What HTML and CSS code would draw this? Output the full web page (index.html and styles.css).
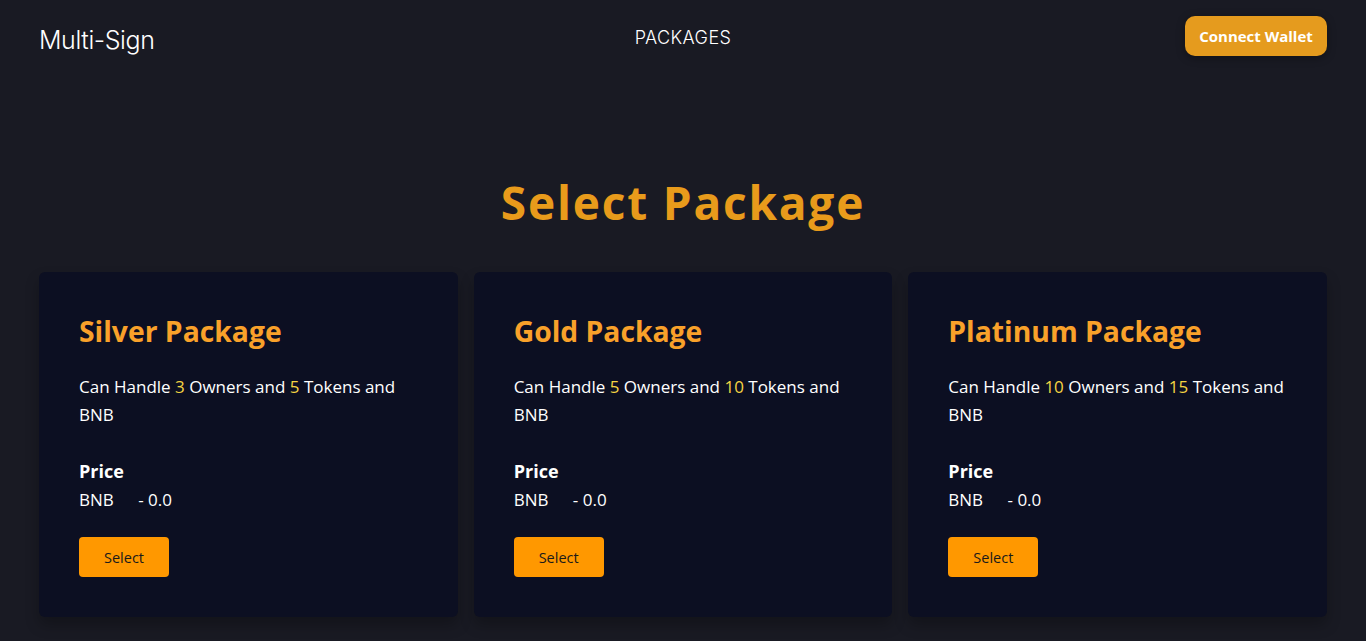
FILE: index.html
```html
<!DOCTYPE html>
<html lang="en">
<head>
<meta charset="utf-8">
<title>Multi-Sign</title>
<link rel="stylesheet" href="styles.css">
</head>
<body>
<header class="topbar">
  <div class="brand">Multi-Sign</div>
  <nav class="nav"><a class="nav-link" href="#">PACKAGES</a></nav>
  <div class="actions"><button class="connect">Connect Wallet</button></div>
</header>
<main class="main">
  <h1 class="page-title">Select Package</h1>
  <section class="cards">
    <article class="card">
      <h2 class="card-title">Silver Package</h2>
      <p class="card-desc">Can Handle <span class="hl">3</span> Owners and <span class="hl">5</span> Tokens and BNB</p>
      <div class="price-label">Price</div>
      <div class="price-value">BNB <span class="gap"></span>- 0.0</div>
      <button class="select-btn">Select</button>
    </article>
    <article class="card">
      <h2 class="card-title">Gold Package</h2>
      <p class="card-desc">Can Handle <span class="hl">5</span> Owners and <span class="hl">10</span> Tokens and BNB</p>
      <div class="price-label">Price</div>
      <div class="price-value">BNB <span class="gap"></span>- 0.0</div>
      <button class="select-btn">Select</button>
    </article>
    <article class="card">
      <h2 class="card-title">Platinum Package</h2>
      <p class="card-desc">Can Handle <span class="hl">10</span> Owners and <span class="hl">15</span> Tokens and BNB</p>
      <div class="price-label">Price</div>
      <div class="price-value">BNB <span class="gap"></span>- 0.0</div>
      <button class="select-btn">Select</button>
    </article>
  </section>
</main>
</body>
</html>
```
FILE: styles.css
```css
* { box-sizing: border-box; }
html, body { margin: 0; padding: 0; }
body {
  background: #191a23;
  color: #ffffff;
  font-family: "Open Sans", "Noto Sans", sans-serif;
  min-height: 641px;
}
.topbar {
  display: grid;
  grid-template-columns: 1fr auto 1fr;
  align-items: center;
  padding: 16px 39px 0 39px;
  height: 56px;
}
.brand {
  font-family: "Inter", "Lato", sans-serif;
  font-weight: 300;
  font-size: 25px;
  color: #ffffff;
  padding-top: 8px;
  letter-spacing: -0.4px;
}
.nav { display: flex; justify-content: center; }
.nav-link {
  font-family: "Inter", "Lato", sans-serif;
  font-weight: 300;
  font-size: 18px;
  color: #ffffff;
  text-decoration: none;
  letter-spacing: 0.4px;
  margin-top: 2px;
}
.actions { display: flex; justify-content: flex-end; }
.connect {
  background: #e59b1e;
  color: #ffffff;
  border: none;
  border-radius: 10px;
  height: 40px;
  width: 142px;
  font-family: "Open Sans", sans-serif;
  font-weight: 700;
  font-size: 15px;
  padding: 0;
  box-shadow: 0 2px 8px rgba(0,0,0,0.35);
}
.main { padding: 0 39px; }
.page-title {
  margin: 114px 0 0 0;
  text-align: center;
  color: #e89b1b;
  font-size: 46px;
  font-weight: 700;
  letter-spacing: 1.8px;
  line-height: 64px;
}
.cards {
  margin-top: 38px;
  display: grid;
  grid-template-columns: repeat(3, 1fr);
  gap: 16px;
}
.card {
  background: #0c0f22;
  border-radius: 6px;
  padding: 39px 40px 40px 40px;
  height: 345px;
  box-shadow: 0 8px 14px rgba(0,0,0,0.25);
}
.card-title {
  margin: 0;
  color: #f9a12a;
  font-size: 28.3px;
  font-weight: 700;
  line-height: 40px;
}
.card-desc {
  margin: 22px 0 0 0;
  font-size: 17px;
  line-height: 28px;
  color: #ffffff;
}
.hl { color: #f5d442; }
.price-label {
  margin-top: 27px;
  font-weight: 700;
  font-size: 18px;
  line-height: 30px;
}
.price-value {
  font-size: 17px;
  line-height: 28px;
}
.gap { display: inline-block; width: 20px; }
.select-btn {
  margin-top: 23px;
  width: 90px;
  height: 40px;
  background: #ff9800;
  color: #1a1a1a;
  border: none;
  border-radius: 4px;
  font-family: "Open Sans", sans-serif;
  font-size: 14.5px;
  padding: 0;
}
```
